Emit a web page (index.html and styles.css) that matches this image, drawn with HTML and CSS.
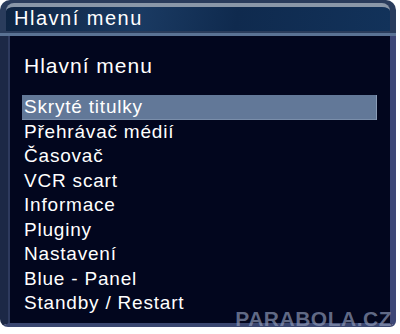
FILE: index.html
```html
<!DOCTYPE html>
<html lang="cs">
<head>
<meta charset="utf-8">
<link rel="stylesheet" href="styles.css">
</head>
<body>
<div class="screen">
  <div class="header">
    <div class="header-bar">
      <span class="header-title">Hlavní menu</span>
    </div>
  </div>
  <div class="body">
    <div class="title">Hlavní menu</div>
    <ul class="menu">
      <li class="item selected">Skryté titulky</li>
      <li class="item">Přehrávač médií</li>
      <li class="item">Časovač</li>
      <li class="item">VCR scart</li>
      <li class="item">Informace</li>
      <li class="item">Pluginy</li>
      <li class="item">Nastavení</li>
      <li class="item">Blue - Panel</li>
      <li class="item">Standby / Restart</li>
    </ul>
  </div>
  <div class="watermark">PARABOLA.CZ</div>
</div>
</body>
</html>
```
FILE: styles.css
```css
html, body {
  margin: 0;
  padding: 0;
  background: #ffffff;
  width: 400px;
  height: 334px;
  overflow: hidden;
}
.screen {
  position: relative;
  width: 396px;
  height: 327px;
  display: flex;
  flex-direction: column;
  font-family: "Liberation Sans", Arial, sans-serif;
  color: #ffffff;
}
.header {
  height: 36px;
  box-sizing: border-box;
  background: #2a3c5c;
  border-radius: 10px 10px 0 0;
  padding: 3px 6px 0 6px;
  border-bottom: 3px solid #5a7294;
}
.header-bar {
  height: 28px;
  box-sizing: border-box;
  border-top: 4px solid #8a97a8;
  border-radius: 8px 8px 0 0;
  background: linear-gradient(100deg, #0e2442 0%, #1a3a62 35%, #0f2a4e 60%, #12325a 100%);
  padding-left: 8px;
  display: flex;
  align-items: center;
}
.header-title {
  font-size: 20px;
  line-height: 22px;
  letter-spacing: 1.5px;
  margin-top: -2px;
}
.body {
  flex: 1;
  background: #02061e;
  border-left: 8px solid #1c2846;
  border-right: 6px solid #3c4676;
  border-bottom: 4px solid #3a4670;
  border-radius: 0 0 6px 8px;
  padding: 18px 0 0 16px;
  box-shadow: inset 2px 0 0 #2e3a5e;
}
.title {
  font-size: 21px;
  line-height: 24px;
  letter-spacing: 1px;
}
.menu {
  list-style: none;
  margin: 17px 0 0 0;
  padding: 0;
  width: 353px;
}
.item {
  font-size: 19px;
  line-height: 24.5px;
  height: 24.5px;
  letter-spacing: 0.8px;
  padding-left: 2px;
  margin-left: -2px;
}
.item.selected {
  background: #627898;
  box-shadow: inset -1px 0 0 #8a9cb6, inset 0 -1px 0 #7a8eaa;
}
.watermark {
  position: absolute;
  right: 4px;
  bottom: -4px;
  font-size: 21px;
  font-weight: bold;
  letter-spacing: 0.5px;
  color: rgba(140, 150, 180, 0.7);
}
```
